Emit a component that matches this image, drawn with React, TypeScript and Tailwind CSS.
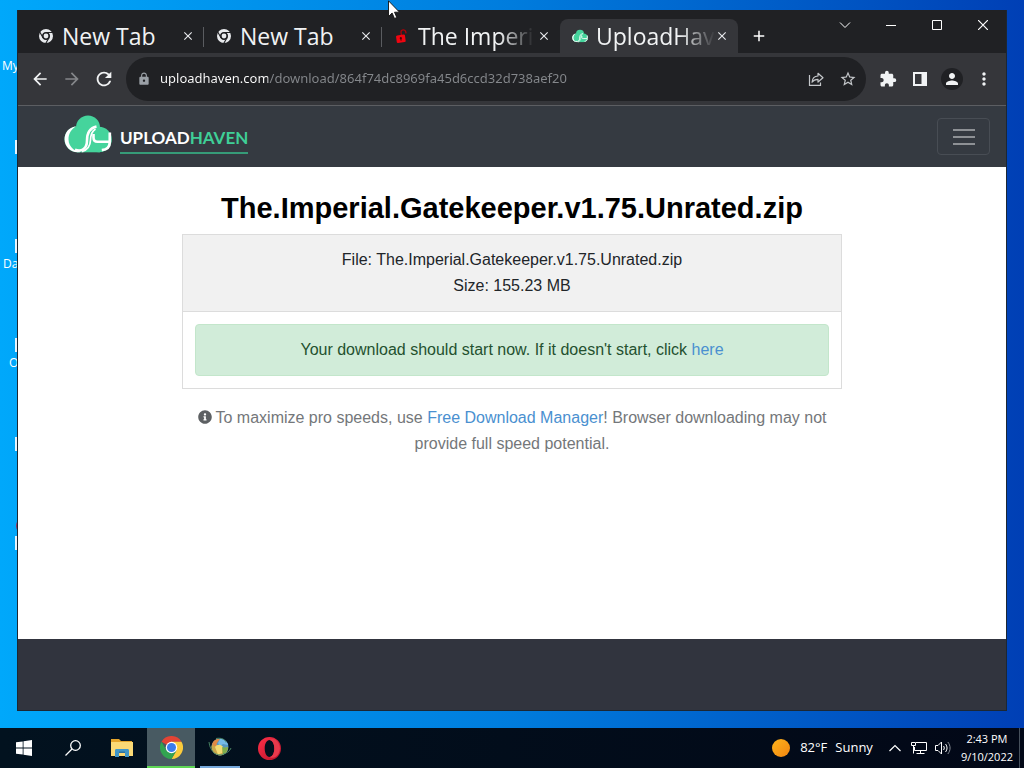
import { FaInfoCircle } from 'react-icons/fa';
import {
  MdAdd,
  MdArrowBack,
  MdArrowForward,
  MdClose,
  MdExtension,
  MdLock,
  MdMoreVert,
  MdPerson,
  MdRefresh,
  MdStarBorder,
} from 'react-icons/md';

const desktopItems = [
  { label: 'My', labelClass: 'top-[58px] left-[2px]', iconClass: 'top-[140px] h-[14px]' },
  { label: 'Da', labelClass: 'top-[256px] left-[3px]', iconClass: 'top-[239px] h-[14px]' },
  { label: 'O', labelClass: 'top-[355px] left-[9px]', iconClass: 'top-[338px] h-[14px]' },
  { label: '', labelClass: 'hidden', iconClass: 'top-[437px] h-[14px]' },
  { label: '', labelClass: 'hidden', iconClass: 'top-[536px] h-[14px]' },
];

function ChromeMono() {
  return (
    <svg viewBox="0 0 16 16" className="size-4" fill="none" stroke="#e8eaed">
      <circle cx="8" cy="8" r="5.4" strokeWidth="3.2" />
      <circle cx="8" cy="8" r="3.5" stroke="#202124" strokeWidth="1" />
      <path d="M8 4.5H15M5 9.8L1.5 3.6M11 9.8L7.5 15.8" stroke="#202124" strokeWidth="1.1" />
      <circle cx="8" cy="8" r="2.4" fill="#e8eaed" stroke="none" />
    </svg>
  );
}

function RedLock() {
  return (
    <svg viewBox="0 0 16 16" className="size-4">
      <g transform="rotate(-8 8 8)">
        <path d="M7.500 7V4.500a2.400 2.400 0 0 1 4.800 0v1.500" fill="none" stroke="#b00008" strokeWidth="1.300" />
        <rect x="2" y="6.800" width="9" height="7.500" rx="1.200" fill="#f00510" />
        <circle cx="6.500" cy="10" r="1.100" fill="#4a0508" />
        <path d="M6 10h1v2.500H6z" fill="#4a0508" />
      </g>
    </svg>
  );
}

function CloudLogo({ className }: { className: string }) {
  return (
    <svg viewBox="0 0 48 38" className={className}>
      <g fill="#45d49c">
        <circle cx="24" cy="12.500" r="12" />
        <circle cx="13.500" cy="24.300" r="13" />
        <circle cx="35" cy="24.500" r="12.800" />
        <path d="M13 22h23v15.300H13z" />
      </g>
      <path
        d="M12 11.300C4.500 12.500.6 18 .6 24.300.6 31.500 6.500 37.300 13.500 37.300h7C14 38 4.500 34 4.500 24.300c0-5.500 2.800-10 7.500-13z"
        fill="#fff"
      />
      <path d="M11 34.800c7 2.500 12-1.300 12-9.300 0-7.500 2.300-12.500 9.500-14" fill="none" stroke="#fff" strokeWidth="2.600" />
      <path d="M18 36.500c5.500-1.500 8.300-5.500 8.500-11.500.1-5 1.200-8.600 5-11" fill="none" stroke="#fff" strokeWidth="1.700" />
      <path d="M29.500 19v3.500c0 3 1.200 4.200 4 4.200H45" fill="none" stroke="#fff" strokeWidth="2.600" />
      <path d="M45.800 17.500v9.500c0 5-3 7.700-8 8.200" fill="none" stroke="#fff" strokeWidth="2.700" />
    </svg>
  );
}

function ShareIcon() {
  return (
    <svg viewBox="0 0 16 16" className="size-4" fill="none" stroke="#c4c7ca" strokeWidth="1.2">
      <path d="M1.500 4v10.400h11V11.500" />
      <path d="M4 11.200C4.300 7.500 6.200 5.200 10 5V2.300L15 6.700 10 11V8.300C7.200 8.300 5.300 9.200 4 11.200Z" strokeLinejoin="round" />
    </svg>
  );
}

const tabs = [
  { title: 'New Tab', icon: <ChromeMono />, active: false, fade: '' },
  { title: 'New Tab', icon: <ChromeMono />, active: false, fade: '' },
  { title: 'The Imperi', icon: <RedLock />, active: false, fade: 'mask-[linear-gradient(90deg,#000_70%,transparent)]' },
  {
    title: 'UploadHav',
    icon: <CloudLogo className="h-4 w-4" />,
    active: true,
    fade: 'mask-[linear-gradient(90deg,#000_70%,transparent)]',
  },
];

function TabStrip() {
  return (
    <div className="flex h-[43px] items-start justify-between bg-[#202124]">
      <div className="mt-[9px] flex h-[34px] min-w-0 pl-2" role="tablist">
        {tabs.map(({ title, icon, active, fade }, i) => (
          <div
            key={i}
            className={
              active
                ? 'relative flex w-[178px] items-center rounded-t-lg bg-[#35363a] pr-2 pl-3'
                : 'relative flex w-[178px] items-center pr-2 pl-3'
            }
          >
            <button
              role="tab"
              aria-selected={active}
              className="flex min-w-0 flex-1 items-center gap-2 text-left text-[23px] leading-8 text-[#f1f3f4]"
            >
              <span className="flex shrink-0">{icon}</span>
              <span className={`whitespace-nowrap ${fade}`}>{title}</span>
            </button>
            <button aria-label="Close tab" className="flex size-4 items-center justify-center text-[#e8eaed]">
              <MdClose className="size-3.5" />
            </button>
            {i < 2 && <span className="absolute top-[8px] right-0 h-5 w-px bg-[#5a5c60]" />}
          </div>
        ))}
        <button aria-label="New tab" className="ml-[7px] flex w-7 items-center justify-center text-white">
          <MdAdd className="size-[18px]" />
        </button>
      </div>
      <div className="flex h-[30px] text-white">
        <button aria-label="Search tabs" className="flex w-[46px] items-center justify-center">
          <svg viewBox="0 0 12 12" className="size-3" fill="none" stroke="currentColor">
            <path d="M1 3.500l5 5 5-5" />
          </svg>
        </button>
        <button aria-label="Minimize" className="flex w-[46px] items-center justify-center">
          <svg viewBox="0 0 10 10" className="size-2.5" stroke="currentColor">
            <path d="M0 5.500h10" />
          </svg>
        </button>
        <button aria-label="Maximize" className="flex w-[46px] items-center justify-center">
          <svg viewBox="0 0 10 10" className="size-2.5" fill="none" stroke="currentColor">
            <path d="M.5 .5h9v9h-9z" />
          </svg>
        </button>
        <button aria-label="Close window" className="flex w-[46px] items-center justify-center">
          <svg viewBox="0 0 10 10" className="size-2.5" stroke="currentColor" strokeWidth="1.200">
            <path d="M0 0l10 10M10 0L0 10" />
          </svg>
        </button>
      </div>
    </div>
  );
}

function Toolbar() {
  return (
    <div className="flex h-[53px] items-center gap-1.5 border-b border-[#5c5e62] bg-[#35363a] px-1.5 text-[#f1f3f4]">
      <div className="flex">
        <button aria-label="Back" className="flex size-8 items-center justify-center">
          <MdArrowBack className="size-5" />
        </button>
        <button aria-label="Forward" className="flex size-8 items-center justify-center text-[#85878a]">
          <MdArrowForward className="size-5" />
        </button>
        <button aria-label="Reload" className="flex size-8 items-center justify-center">
          <MdRefresh className="size-[22px]" />
        </button>
      </div>
      <div className="flex h-11 min-w-0 flex-1 items-center rounded-full bg-[#202124] pr-0.5 pl-[11px]">
        <MdLock className="size-3.5 shrink-0 text-[#9aa0a6]" />
        <input
          aria-label="Address"
          defaultValue="uploadhaven.com/download/864f74dc8969fa45d6ccd32d738aef20"
          className="ml-[9px] min-w-0 flex-1 bg-[linear-gradient(90deg,#fff_108px,#85888c_108px)] bg-clip-text font-['Noto_Sans',sans-serif] text-[13px] text-transparent outline-none"
        />
        <button aria-label="Share" className="flex size-8 items-center justify-center">
          <ShareIcon />
        </button>
        <button aria-label="Bookmark" className="flex size-8 items-center justify-center text-[#c4c7ca]">
          <MdStarBorder className="size-[18px]" />
        </button>
      </div>
      <div className="flex">
        <button aria-label="Extensions" className="flex size-8 items-center justify-center">
          <MdExtension className="size-[18px]" />
        </button>
        <button aria-label="Side panel" className="flex size-8 items-center justify-center">
          <svg viewBox="0 0 14 14" className="size-3.5">
            <path d="M0 0h14v14H0zM2 2v10h6.500V2z" fill="#f1f3f4" fillRule="evenodd" />
          </svg>
        </button>
        <button aria-label="Profile" className="flex size-8 items-center justify-center">
          <span className="flex size-[22px] items-center justify-center rounded-full bg-[#202124]">
            <MdPerson className="size-[18px]" />
          </span>
        </button>
        <button aria-label="Menu" className="flex size-8 items-center justify-center">
          <MdMoreVert className="size-5" />
        </button>
      </div>
    </div>
  );
}

function SiteHeader() {
  return (
    <header className="flex h-[61px] items-center justify-between bg-[#353a41] pr-4 pl-[46px]">
      <a href="#" className="flex items-center gap-2">
        <CloudLogo className="-mt-1.5 h-[38px] w-12" />
        <span className="mt-1 border-b-2 border-[#369b78] font-['Lato',sans-serif] text-[17px] leading-7 font-bold text-white">
          UPLOAD<span className="text-[#3fcf97]">HAVEN</span>
        </span>
      </a>
      <button
        aria-label="Toggle navigation"
        className="flex h-[37px] w-[53px] flex-col items-center justify-center gap-[5px] rounded border border-[#484d54]"
      >
        <span className="h-0.5 w-[22px] bg-[#8e9195]" />
        <span className="h-0.5 w-[22px] bg-[#8e9195]" />
        <span className="h-0.5 w-[22px] bg-[#8e9195]" />
      </button>
    </header>
  );
}

function DownloadPage() {
  return (
    <main className="flex-1 bg-white pt-[23px] text-center font-['Liberation_Sans',Arial,sans-serif] text-base leading-[26px] text-[#212529]">
      <div className="mx-auto max-w-[660px]">
        <h1 className="mb-2 text-[29px] leading-9 font-bold text-black">The.Imperial.Gatekeeper.v1.75.Unrated.zip</h1>
        <div className="border border-[#dcdcdc]">
          <div className="border-b border-[#dcdcdc] bg-[#f1f1f1] py-3">
            <p>File: The.Imperial.Gatekeeper.v1.75.Unrated.zip</p>
            <p>Size: 155.23 MB</p>
          </div>
          <div className="p-3">
            <div className="rounded border border-[#c3e6cb] bg-[#d1ecd9] py-3 text-[#24512f]">
              Your download should start now. If it doesn't start, click{' '}
              <a href="#" className="text-[#4a90d0]">
                here
              </a>
            </div>
          </div>
        </div>
        <p className="mt-4 px-3 text-[#74777a]">
          <FaInfoCircle className="mr-1 inline size-3.5 align-[-1px] text-[#5d6063]" />
          To maximize pro speeds, use{' '}
          <a href="#" className="text-[#4a90d0]">
            Free Download Manager
          </a>
          ! Browser downloading may not provide full speed potential.
        </p>
      </div>
    </main>
  );
}

function Taskbar() {
  return (
    <footer className="flex h-10 shrink-0 items-stretch justify-between bg-linear-to-r from-[#02121f] to-[#020817] text-white">
      <nav className="flex gap-px">
        <button aria-label="Start" className="flex w-12 items-center justify-center">
          <svg viewBox="0 0 16 16" className="size-4" fill="#fff">
            <path d="M0 2.300l6.700-.9v6.200H0zM7.500 1.300L16 .1v7.500H7.500zM0 8.400h6.700v6.200L0 13.700zM7.500 8.400H16v7.500l-8.500-1.200z" />
          </svg>
        </button>
        <button aria-label="Search" className="flex w-12 items-center justify-center">
          <svg viewBox="0 0 16 16" className="size-4" fill="none" stroke="#fff" strokeWidth="1.300">
            <circle cx="10.500" cy="5.500" r="4.800" />
            <path d="M7 9L.5 15.500" />
          </svg>
        </button>
        <button aria-label="File Explorer" className="flex w-12 items-center justify-center">
          <svg viewBox="0 0 22 18" className="h-[18px] w-[22px]">
            <path d="M0 0h8l2 2h11v3H0z" fill="#e5a52b" />
            <path d="M0 3h22v14H0z" fill="#fbd975" />
            <path d="M4 18v-6.500c0-1 .6-1.500 1.500-1.500h11c.9 0 1.500.5 1.500 1.500V18h-4v-4H8v4z" fill="#4096c8" />
            <path d="M8 12.500h6V14H8z" fill="#2c719f" />
          </svg>
        </button>
        <button
          aria-label="Google Chrome"
          className="flex w-12 items-center justify-center border-b-2 border-[#5fd755] bg-[#485a62]"
        >
          <svg viewBox="0 0 24 24" className="size-[23px]">
            <path d="M12 12L1.600 6A12 12 0 0 1 22.400 6L12 6z" fill="#e24435" />
            <path d="M12 12V6h10.400A12 12 0 0 1 12 24l5.200-9z" fill="#fbcb3c" />
            <path d="M1.600 6l5.200 9L12 18l5.200-3L12 24A12 12 0 0 1 1.600 6z" fill="#32a350" />
            <circle cx="12" cy="12" r="6" fill="#fff" />
            <circle cx="12" cy="12" r="4.700" fill="#3b7cec" />
          </svg>
        </button>
        <button aria-label="Download Manager" className="flex w-12 items-center justify-center px-1">
          <span className="flex h-full w-10 items-center justify-center border-b-2 border-[#76a9dc]">
            <svg viewBox="0 0 24 20" className="h-5 w-6">
              <circle cx="12" cy="10" r="8.500" fill="#5797c0" />
              <path d="M3.500 9C5 6 8 7 10 9s5 3 10 1c0 5-4 8.500-8 8.500S3 15 3.500 9z" fill="#c9a84a" />
              <path d="M4 7.500C5 3 9 1.500 12 2L9 6 8 10z" fill="#e08a45" />
              <path d="M12 2c4 0 7.500 2.500 8 6l-5-1-3 2-2-3z" fill="#76b9e8" />
              <path d="M7 10c2-3 6-3 8 0l-1 6-4 1.500z" fill="#f3dc74" />
              <path d="M14 10c2 1 4 .500 6 0 0 3-2 6-5 7.500z" fill="#7fae4c" />
              <path d="M1 5c1 10 8 15 15 12M8 1.500c6-1 9 1 10 4M15 17c4-1 7-3 8-6" fill="none" stroke="#4f8f6a" strokeWidth=".9" />
            </svg>
          </span>
        </button>
        <button aria-label="Opera" className="flex w-12 items-center justify-center">
          <svg viewBox="0 0 24 24" className="size-[23px]">
            <defs>
              <linearGradient id="opera" x2="1" y2="1">
                <stop offset="0" stopColor="#ff3048" />
                <stop offset="1" stopColor="#b5122a" />
              </linearGradient>
            </defs>
            <path
              d="M12 0a12 12 0 1 0 0 24 12 12 0 0 0 0-24zm0 3.200c3 0 5 3.800 5 8.800s-2 8.800-5 8.800S7 17 7 12s2-8.800 5-8.800z"
              fill="url(#opera)"
              fillRule="evenodd"
            />
            <path d="M12 3.200c3 0 5 3.800 5 8.800s-2 8.800-5 8.800c3 2 7.500.5 9.300-3a12 12 0 0 0 0-11.600C19.500 2.700 15 1 12 3.200z" fill="#e8394c" />
          </svg>
        </button>
      </nav>
      <div className="flex items-center">
        <button className="flex items-center text-[13px]">
          <span className="mr-2.5 size-[18px] rounded-full bg-linear-to-br from-[#fdb41c] to-[#f28410]" />
          <span className="mr-2">82°F</span>
          <span>Sunny</span>
        </button>
        <div className="ml-2.5 flex">
          <button aria-label="Show hidden icons" className="flex w-6 items-center justify-center">
            <svg viewBox="0 0 12 8" className="h-2 w-3" fill="none" stroke="#fff" strokeWidth="1.200">
              <path d="M.5 7L6 1.500 11.500 7" />
            </svg>
          </button>
          <button aria-label="Network" className="flex w-6 items-center justify-center">
            <svg viewBox="0 0 16 14" className="h-3.5 w-4" fill="none" stroke="#fff">
              <path d="M5 1.500h10.500v8H3.500V6M9.500 9.500v3M5.500 12.500h8M.5 1.500h4v3h-4zM2.500 4.500v8" />
            </svg>
          </button>
          <button aria-label="Volume" className="flex w-6 items-center justify-center">
            <svg viewBox="0 0 16 14" className="h-3.5 w-4" fill="none" stroke="#fff">
              <path d="M.5 4.500h2.500l3.500-3.500v12L3 9.500H.5zM8.500 5c1 1.300 1 2.700 0 4M10.500 3c2 2.500 2 5.500 0 8" />
              <path d="M12.800 1c3 3.600 3 8.400 0 12" stroke="#8a8f98" />
            </svg>
          </button>
        </div>
        <button className="mr-1.5 ml-1.5 text-center text-[11px] leading-[18px]">
          2:43 PM
          <br />
          9/10/2022
        </button>
        <span className="mr-1 h-full w-px bg-[#46505c]" />
      </div>
    </footer>
  );
}

export default function App() {
  return (
    <div className="relative flex h-screen flex-col overflow-hidden bg-linear-to-r from-[#00a8fb] via-[#007cdd] to-[#003fb5] font-['Open_Sans','Noto_Sans',sans-serif]">
      {/* Desktop shortcuts, mostly hidden behind the window */}
      {desktopItems.map(({ label, labelClass, iconClass }, i) => (
        <div key={i}>
          <span className={`absolute text-[12px] leading-4 text-white ${labelClass}`}>{label}</span>
          <span className={`absolute left-[15px] w-1 bg-[#e8f4fc] ${iconClass}`} />
        </div>
      ))}
      <span className="absolute top-[518px] left-4 h-4 w-2 rounded-l-full bg-[#a32a55]" />

      <div className="relative mx-[17px] mt-2.5 mb-[17px] flex min-h-0 flex-1 flex-col border-x border-b border-[#1c2733] bg-[#202124]">
        <TabStrip />
        <Toolbar />
        <SiteHeader />
        <DownloadPage />
        <div className="h-[71px] bg-[#31343e]" />
      </div>

      <Taskbar />

      {/* Mouse pointer */}
      <svg viewBox="0 0 12 19" className="absolute top-0 left-[388px] h-[19px] w-3">
        <path
          d="M.5 .8v15.700l3.600-3.500 2.400 5.500 2.300-1-2.300-5.300h5z"
          fill="#fff"
          stroke="#111"
          strokeWidth=".9"
        />
      </svg>
    </div>
  );
}
